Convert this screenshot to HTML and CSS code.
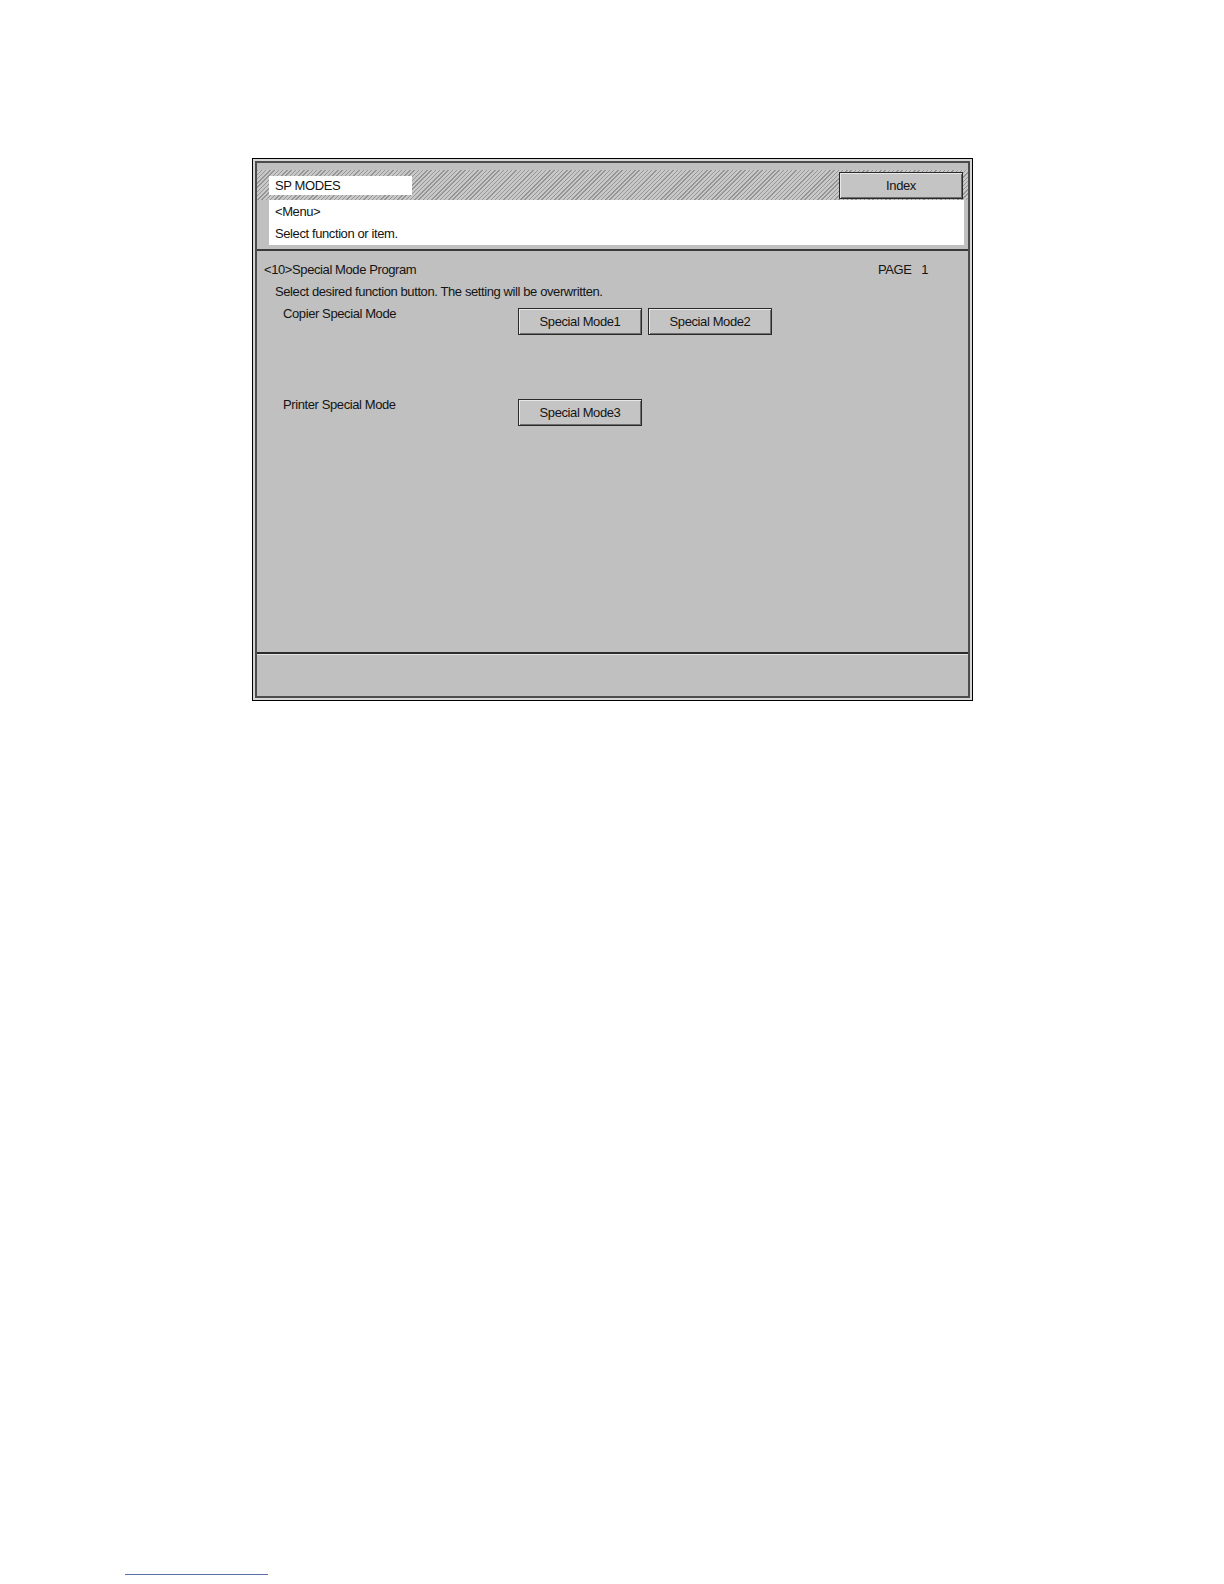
FILE: index.html
```html
<!DOCTYPE html>
<html>
<head>
<meta charset="utf-8">
<link rel="stylesheet" href="styles.css">
</head>
<body>
<div class="page">
  <div class="frame">
    <div class="inner">
      <div class="header">
        <div class="hatch">
          <div class="title-box">SP MODES</div>
          <div class="btn index-btn">Index</div>
        </div>
        <div class="message">
          <div class="line">&lt;Menu&gt;</div>
          <div class="line">Select function or item.</div>
        </div>
      </div>
      <div class="body">
        <div class="head-row">
          <span class="prog">&lt;10&gt;Special Mode Program</span>
          <span class="page-no">PAGE&nbsp;&nbsp;&nbsp;1</span>
        </div>
        <div class="instr">Select desired function button. The setting will be overwritten.</div>
        <div class="mode-row">
          <div class="mode-label">Copier Special Mode</div>
          <div class="btns">
            <div class="btn mode-btn">Special Mode1</div>
            <div class="btn mode-btn">Special Mode2</div>
          </div>
        </div>
        <div class="mode-row">
          <div class="mode-label">Printer Special Mode</div>
          <div class="btns">
            <div class="btn mode-btn">Special Mode3</div>
          </div>
        </div>
      </div>
      <div class="footer"></div>
    </div>
  </div>
  <div class="foot-rule"></div>
</div>
</body>
</html>
```

FILE: styles.css
```css
* { box-sizing: border-box; }
html, body { margin: 0; padding: 0; background: #ffffff; }
body {
  font-family: "Liberation Sans Narrow", "Arial Narrow", "Liberation Sans", Arial, sans-serif;
  font-size: 13px;
  letter-spacing: -0.4px;
  color: #141414;
}
.page {
  padding-top: 158px;
  padding-left: 252px;
}
.frame {
  width: 721px;
  height: 543px;
  border: 1px solid #000000;
  padding: 2px;
  background: #d6d6d6;
}
.inner {
  height: 100%;
  border: 2px solid #4c4c4c;
  background: #c0c0c0;
  display: flex;
  flex-direction: column;
}
.header {
  padding-top: 7px;
  border-bottom: 2px solid #3a3a3a;
  padding-bottom: 4px;
}
.hatch {
  height: 30px;
  display: flex;
  justify-content: space-between;
  align-items: flex-start;
  padding: 0 5px 0 12px;
  background: repeating-linear-gradient(135deg, #959595 0 1px, #c8c8c8 1px 3px);
}
.title-box {
  margin-top: 6px;
  width: 143px;
  height: 19px;
  background: #ffffff;
  line-height: 19px;
  padding-left: 6px;
}
.btn {
  background: #c4c4c4;
  border: 1px solid #2a2a2a;
  box-shadow: inset 1px 1px 0 #e8e8e8, inset -1px -1px 0 #6e6e6e;
  text-align: center;
}
.index-btn {
  margin-top: 2px;
  width: 124px;
  height: 27px;
  line-height: 25px;
}
.message {
  margin: 0 4px 0 12px;
  height: 45px;
  background: #ffffff;
  padding: 1px 0 0 6px;
}
.line {
  line-height: 22px;
}
.body {
  flex: 1;
  padding: 8px 0 0 7px;
}
.head-row {
  display: flex;
  line-height: 22px;
}
.prog { width: 614px; }
.instr {
  line-height: 22px;
  padding-left: 11px;
}
.mode-row {
  display: flex;
  height: 91px;
  padding-left: 19px;
}
.mode-label {
  width: 235px;
  line-height: 22px;
}
.btns {
  display: flex;
  gap: 6px;
  margin-top: 5px;
  align-items: flex-start;
}
.mode-btn {
  width: 124px;
  height: 27px;
  line-height: 25px;
}
.footer {
  height: 44px;
  border-top: 2px solid #2c2c2c;
  box-shadow: inset 0 1px 0 #e4e4e4;
}
.foot-rule {
  margin-top: 873px;
  margin-left: -127px;
  width: 143px;
  height: 1px;
  background: #5a6ea8;
}
```
